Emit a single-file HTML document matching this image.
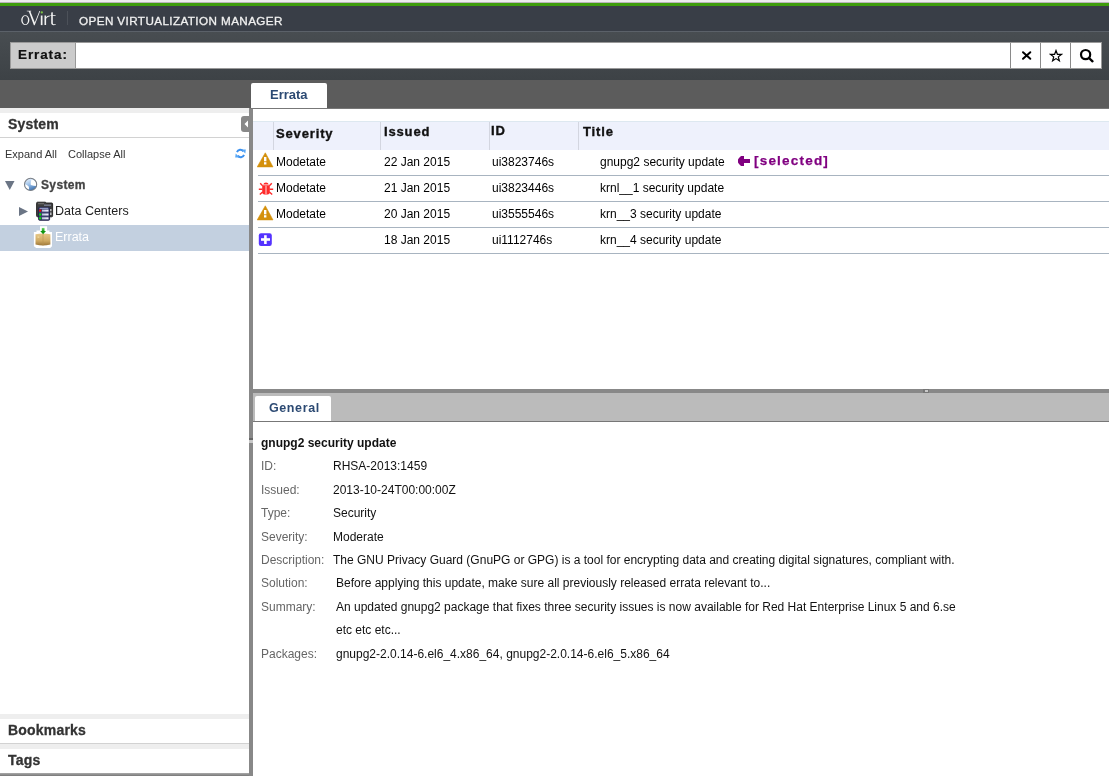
<!DOCTYPE html>
<html><head><meta charset="utf-8">
<style>
*{margin:0;padding:0;box-sizing:border-box}
html,body{width:1109px;height:776px;overflow:hidden;background:#fff;font-family:"Liberation Sans",sans-serif;position:relative}
.a{position:absolute}
.t{position:absolute;white-space:nowrap;line-height:1}
#top{left:0;top:0;width:1109px;height:3px;background:#ececec}
#top2{left:0;top:2px;width:1109px;height:1px;background:#b9b3b9}
#green{left:0;top:3px;width:1109px;height:3px;background:#3e9c0c}
#hdr{left:0;top:6px;width:1109px;height:25px;background:#393e47}
#hdrline{left:0;top:31px;width:1109px;height:1px;background:#5b6169}
#sbar{left:0;top:32px;width:1109px;height:48px;background:linear-gradient(#484d51,#3d4246)}
#band{left:0;top:80px;width:1109px;height:28px;background:#5c5c5c}
.logo{left:21px;top:8px;font-family:"Liberation Serif",serif;color:#fff;font-size:21px;letter-spacing:-2px}
.sep{left:67px;top:11px;width:1px;height:14px;background:#4c5159}
.brand{left:79px;top:15px;color:#f0f0f0;font-size:11.7px;letter-spacing:0.4px;-webkit-text-stroke:0.3px #f0f0f0}
#slabel{left:10px;top:42px;width:66px;height:27px;background:#cbcbcb;border:1px solid #999}
#sinput{left:75px;top:42px;width:1027px;height:27px;background:#fff;border:1px solid #999}
.sbtn{top:43px;width:1px;height:25px;background:#8a8a8a}
/* left panel */
#lp{left:0;top:108px;width:249px;height:668px;background:#fff}
.strip{left:0;width:249px;height:5px;background:#eeeeee}
.hline{left:0;width:249px;height:1px;background:#d2d2d2}
#split{left:249px;top:108px;width:4px;height:668px;background:#888}
#hsplit{left:253px;top:389px;width:856px;height:4px;background:#888}
.sec{font-weight:bold;font-size:14px;color:#333;letter-spacing:0.2px;-webkit-text-stroke:0.3px #333}
.small{font-size:11px;color:#333}
#selrow{left:0;top:225px;width:249px;height:26px;background:#c3d0e0}
/* main */
#mline{left:250px;top:108px;width:859px;height:1px;background:#777}
.tab{background:#fff;border-radius:2px 2px 0 0}
.tabt{font-weight:bold;color:#2c4a73}
#thead{left:253px;top:121px;width:856px;height:29px;background:#eef1fc;border-top:1px solid #dde8f0}
.csep{top:122px;width:1px;height:28px;background:#d3d6e0}
.th{font-weight:bold;font-size:13px;color:#111;letter-spacing:0.85px;-webkit-text-stroke:0.35px #111}
.rline{left:258px;width:851px;height:1px;background:#a8b4c0}
.td{font-size:12px;color:#000}
#dtabbar{left:253px;top:393px;width:856px;height:28px;background:#bbb}
#dtabline{left:253px;top:421px;width:856px;height:1px;background:#777}
.lbl{font-size:12px;color:#666}
.val{font-size:12px;color:#111}
#bottom{left:0;top:773px;width:249px;height:3px;background:linear-gradient(#aaa,#777)}
</style></head><body><div id="root" style="position:absolute;left:0;top:0;width:1109px;height:776px;will-change:transform">
<div id="top" class="a"></div>
<div id="top2" class="a"></div>
<div id="green" class="a"></div>
<div id="hdr" class="a"></div>
<div id="hdrline" class="a"></div>
<div id="sbar" class="a"></div>
<div id="band" class="a"></div>
<svg class="a" style="left:0;top:0" width="70" height="31" viewBox="0 0 70 31"><g fill="#f2f2f2"><path d="M25.3 15.2C27.6 15.2 29.4 17.3 29.4 20.1C29.4 23 27.6 25.1 25.3 25.1C23 25.1 21.2 23 21.2 20.1C21.2 17.3 23 15.2 25.3 15.2ZM25.1 16.1C23.6 16.1 22.6 17.8 22.6 20.1C22.6 22.6 23.7 24.3 25.4 24.3C26.9 24.3 28 22.5 28 20.1C28 17.7 26.9 16.1 25.1 16.1Z"/><path d="M26.8 10.8H31.2V11.3L30.4 11.5L34.8 22.6L39.4 11H40.2L34.7 25.2H33.9L28.8 11.5L26.8 11.3Z"/><rect x="40.8" y="15.5" width="1.7" height="9.6"/><path d="M44.5 15.5H46.1V17.6C46.8 16.2 48 15.3 49.8 15.4V16.6C48.2 16.5 46.7 17.6 46.1 18.8V25.1H44.5Z"/><path d="M51.2 12.6L52.8 12.2V15.2H55.6V16H52.8V23C52.8 23.9 53.4 24.3 54.1 24.3C54.7 24.3 55.3 24.1 55.9 23.9V24.6C55.2 25 54.5 25.2 53.7 25.2C52.1 25.2 51.2 24.4 51.2 23V16H50.4V15.3L51.2 15.2Z"/></g><circle cx="41.8" cy="12.4" r="1.15" fill="#7ac143"/></svg>
<div class="a sep"></div>
<div class="t brand">OPEN VIRTUALIZATION MANAGER</div>
<div id="slabel" class="a"></div>
<div class="t" style="left:18px;top:48px;font-weight:bold;font-size:13.5px;letter-spacing:0.9px;color:#111;-webkit-text-stroke:0.2px #111">Errata:</div>
<div id="sinput" class="a"></div>
<div class="a sbtn" style="left:1010px"></div>
<div class="a sbtn" style="left:1040px"></div>
<div class="a sbtn" style="left:1070px"></div>
<svg class="a" style="left:1020px;top:49px" width="14" height="13" viewBox="0 0 14 13"><path d="M3 3.2L10.3 9.8M10.3 3.2L3 9.8" stroke="#000" stroke-width="2" stroke-linecap="round"/></svg>
<svg class="a" style="left:1049px;top:48.5px" width="14" height="14" viewBox="0 0 14 14"><path d="M7 1.5L8.4 5.3L12.4 5.4L9.3 7.9L10.4 11.8L7 9.6L3.6 11.8L4.7 7.9L1.6 5.4L5.6 5.3Z" fill="none" stroke="#000" stroke-width="1.2" stroke-linejoin="miter"/></svg>
<svg class="a" style="left:1079px;top:48px" width="16" height="15" viewBox="0 0 16 15"><circle cx="6.6" cy="6.6" r="4.6" fill="none" stroke="#000" stroke-width="2.2"/><path d="M10 10L13.5 13.3" stroke="#000" stroke-width="2.4" stroke-linecap="round"/></svg>

<!-- left panel -->
<div id="lp" class="a"></div>
<div class="a strip" style="top:108px"></div>
<div class="t sec" style="left:8px;top:117px">System</div>
<div class="a hline" style="top:137px"></div>
<div class="t small" style="left:5px;top:149px">Expand All</div>
<div class="t small" style="left:68px;top:149px">Collapse All</div>
<svg class="a" style="left:234px;top:147px" width="13" height="13" viewBox="0 0 13 13"><path d="M3 5.2A3.6 3.6 0 0 1 9.3 4.3" fill="none" stroke="#3a90f0" stroke-width="2"/><path d="M7.4 2.6L11.8 2.4L11.3 6.6Z" fill="#5aa8f5"/><path d="M10 7.8A3.6 3.6 0 0 1 3.7 8.7" fill="none" stroke="#3a90f0" stroke-width="2"/><path d="M5.6 10.4L1.2 10.6L1.7 6.4Z" fill="#5aa8f5"/></svg>

<!-- tree -->
<svg class="a" style="left:5px;top:181px" width="10" height="9" viewBox="0 0 10 9"><path d="M0 0H9.5L4.75 9Z" fill="#6b7585"/></svg>
<svg class="a" style="left:23px;top:177px" width="15" height="15" viewBox="0 0 15 15"><defs><linearGradient id="gl" x1="0.2" y1="0.1" x2="0.6" y2="1"><stop offset="0" stop-color="#e2effc"/><stop offset="0.45" stop-color="#9cc0e8"/><stop offset="1" stop-color="#3a70b0"/></linearGradient></defs><circle cx="7.6" cy="7.4" r="6.2" fill="url(#gl)"/><path d="M8.6 2.6C10.2 2.6 12.2 3.8 13.2 5.6L13.4 9C11.6 9 9.6 8.6 7.8 8C7.5 6.2 7.8 4.2 8.6 2.6Z" fill="#fff"/><path d="M1.4 7.2C3 7.3 4.8 8.2 5.6 9.5C6.1 10.5 6.2 11.6 5.9 12.8C3.6 11.9 1.6 9.8 1.4 7.2Z" fill="#fff"/><circle cx="7.6" cy="7.4" r="6.1" fill="none" stroke="#7a7f86" stroke-width="1.1"/></svg>
<div class="t" style="left:41px;top:179px;font-weight:bold;font-size:12px;letter-spacing:0.35px;color:#444;-webkit-text-stroke:0.3px #444">System</div>
<svg class="a" style="left:19px;top:207px" width="10" height="9" viewBox="0 0 10 9"><path d="M0 0V9L9 4.5Z" fill="#6b7585"/></svg>
<svg class="a" style="left:35px;top:201px" width="19" height="20" viewBox="0 0 19 20"><defs><linearGradient id="bar" x1="0" x2="1"><stop offset="0" stop-color="#b8bce0"/><stop offset="1" stop-color="#f4f4ff"/></linearGradient></defs><path d="M1.6 2.2Q1.6 1.2 2.6 1.2H10.5L11.2 2H16.7Q17.6 2 17.6 3V14.8Q17.6 15.8 16.6 15.8H2.6Q1.6 15.8 1.6 14.8Z" fill="#3e3e3e" stroke="#1c1c1c" stroke-width="0.9"/><rect x="3" y="2.2" width="6" height="1" fill="#777"/><rect x="9" y="3.6" width="7" height="1.1" fill="#8a90a8"/><rect x="15" y="8" width="1.5" height="2.2" fill="#c8c8c8"/><rect x="15" y="11.5" width="1.5" height="2.5" fill="#c8c8c8"/><rect x="3.6" y="6.3" width="11" height="13" rx="1" fill="#3a3f6c" stroke="#20234a" stroke-width="0.9"/><rect x="4.6" y="6.8" width="8.6" height="1" fill="#a6aed8"/><rect x="4.2" y="8.6" width="2" height="2" fill="#f00"/><rect x="4.2" y="12.5" width="2" height="2" fill="#0e0"/><rect x="4.2" y="16.3" width="2" height="2" fill="#0e0"/><rect x="7" y="8.6" width="6.5" height="2" fill="url(#bar)"/><rect x="7" y="12.5" width="6.5" height="2" fill="url(#bar)"/><rect x="7" y="16.3" width="6.5" height="2" fill="url(#bar)"/></svg>
<div class="t" style="left:55px;top:205px;font-size:12.5px;color:#222">Data Centers</div>
<div id="selrow" class="a"></div>
<svg class="a" style="left:33px;top:225px" width="20" height="24" viewBox="0 0 20 24"><defs><linearGradient id="bx" x1="0" y1="0" x2="0" y2="1"><stop offset="0" stop-color="#e6c88a"/><stop offset="0.6" stop-color="#cfa962"/><stop offset="1" stop-color="#9c7638"/></linearGradient><linearGradient id="ar" x1="0" y1="0" x2="0" y2="1"><stop offset="0" stop-color="#6fe06f"/><stop offset="1" stop-color="#0a8a0a"/></linearGradient></defs><path d="M7 1.2H14.1V5.4H16.4V6.9H19V21.2L17.2 23H3.2L0.9 21.2V6.9H3.5V5.4H7Z" fill="#fff"/><path d="M2.5 9.2Q10 8 17.4 9.2V19.6Q10 21.6 2.5 19.6Z" fill="url(#bx)"/><path d="M10 9V20.7" stroke="#b89352" stroke-width="0.6"/><rect x="4.5" y="11.5" width="1.8" height="1.2" fill="#f2dca0"/><rect x="8.8" y="2.9" width="2.7" height="3.6" fill="url(#ar)"/><path d="M7.2 6H13L10.1 9.2Z" fill="#0f950f"/></svg>
<div class="t" style="left:55px;top:231px;font-size:12.5px;color:#fff">Errata</div>

<div class="a strip" style="top:714px"></div>
<div class="t sec" style="left:8px;top:723px">Bookmarks</div>
<div class="a hline" style="top:743px"></div>
<div class="a strip" style="top:744px"></div>
<div class="t sec" style="left:8px;top:753px">Tags</div>
<div id="bottom" class="a"></div>

<div id="split" class="a"></div><div class="a" style="left:249px;top:438px;width:4px;height:2px;background:#666"></div><div class="a" style="left:249px;top:440px;width:4px;height:3px;background:#c8c8c8"></div>
<svg class="a" style="left:241px;top:116px" width="8" height="16" viewBox="0 0 8 16"><path d="M8 0H3A3 3 0 0 0 0 3V13A3 3 0 0 0 3 16H8Z" fill="#888"/><path d="M3.5 8L7 4.5V11.5Z" fill="#fff"/></svg>

<!-- main -->
<div id="mline" class="a"></div>
<div class="a tab" style="left:251px;top:83px;width:76px;height:25px"></div>
<div class="t tabt" style="left:270px;top:88px;font-size:13px">Errata</div>

<div id="thead" class="a"></div>
<div class="a csep" style="left:273px"></div>
<div class="a csep" style="left:380px"></div>
<div class="a csep" style="left:489px"></div>
<div class="a csep" style="left:578px"></div>
<div class="t th" style="left:276px;top:127px">Severity</div>
<div class="t th" style="left:384px;top:125px">Issued</div>
<div class="t th" style="left:491px;top:124px">ID</div>
<div class="t th" style="left:583px;top:125px">Title</div>

<div class="a rline" style="top:175px"></div>
<div class="a rline" style="top:201px"></div>
<div class="a rline" style="top:227px"></div>
<div class="a rline" style="top:253px"></div>

<svg class="a" style="left:257px;top:152px" width="17" height="16" viewBox="0 0 17 16"><path d="M8.3 0.8L16 14.9H0.2Z" fill="#d4900b" stroke="#d4900b" stroke-width="0.6" stroke-linejoin="round"/><rect x="7" y="5" width="2.4" height="4.3" fill="#fff"/><rect x="7" y="10.2" width="2.4" height="2.3" fill="#fff"/></svg>
<svg class="a" style="left:258px;top:180px" width="16" height="16" viewBox="0 0 16 16"><path d="M5.2 4.4A2.9 2.7 0 0 1 10.8 4.4Z" fill="#ff2a2a"/><path d="M4.2 5.2H11.8V12.2Q11.8 14.6 9.5 14.6H6.5Q4.2 14.6 4.2 12.2Z" fill="#ff2a2a"/><path d="M2.2 3.2L4.6 5.8M13.8 3.2L11.4 5.8M0.8 9.3H4.5M15.2 9.3H11.5M1.8 14.6L4.6 12M14.2 14.6L11.4 12" stroke="#ff2a2a" stroke-width="1.4"/><rect x="7.2" y="5.6" width="1.6" height="8.6" fill="#ff9a9a"/></svg>
<svg class="a" style="left:257px;top:205px" width="17" height="16" viewBox="0 0 17 16"><path d="M8.3 0.8L16 14.9H0.2Z" fill="#d4900b" stroke="#d4900b" stroke-width="0.6" stroke-linejoin="round"/><rect x="7" y="5" width="2.4" height="4.3" fill="#fff"/><rect x="7" y="10.2" width="2.4" height="2.3" fill="#fff"/></svg>
<svg class="a" style="left:258px;top:233px" width="14" height="14" viewBox="0 0 14 14"><rect x="0.8" y="0.2" width="13" height="12.8" rx="2.2" fill="#5533ff"/><rect x="3" y="5.2" width="9" height="2.6" fill="#fff"/><rect x="6.1" y="2.2" width="2.6" height="8.8" fill="#fff"/></svg>

<div class="t td" style="left:276px;top:156px">Modetate</div>
<div class="t td" style="left:384px;top:156px">22 Jan 2015</div>
<div class="t td" style="left:492px;top:156px">ui3823746s</div>
<div class="t td" style="left:600px;top:156px">gnupg2 security update</div>
<svg class="a" style="left:737px;top:155px" width="14" height="12" viewBox="0 0 14 12"><path d="M1 4.5L2 3L3 2L4 1H7V4H13V8H7V11H4L3 10L2 9L1 7.5Z" fill="#800080"/></svg>
<div class="t" style="left:754px;top:154px;font-weight:bold;font-size:13.5px;letter-spacing:1.2px;color:#800080;-webkit-text-stroke:0.25px #800080">[selected]</div>

<div class="t td" style="left:276px;top:182px">Modetate</div>
<div class="t td" style="left:384px;top:182px">21 Jan 2015</div>
<div class="t td" style="left:492px;top:182px">ui3823446s</div>
<div class="t td" style="left:600px;top:182px">krnl__1 security update</div>

<div class="t td" style="left:276px;top:208px">Modetate</div>
<div class="t td" style="left:384px;top:208px">20 Jan 2015</div>
<div class="t td" style="left:492px;top:208px">ui3555546s</div>
<div class="t td" style="left:600px;top:208px">krn__3 security update</div>

<div class="t td" style="left:384px;top:234px">18 Jan 2015</div>
<div class="t td" style="left:492px;top:234px">ui1112746s</div>
<div class="t td" style="left:600px;top:234px">krn__4 security update</div>

<div id="hsplit" class="a"></div><div class="a" style="left:923px;top:389px;width:6px;height:4px;background:#777"></div><div class="a" style="left:925px;top:390px;width:3px;height:2px;background:#c8c8c8"></div>
<div id="dtabbar" class="a"></div>
<div id="dtabline" class="a"></div>
<div class="a tab" style="left:255px;top:396px;width:76px;height:25px"></div>
<div class="t tabt" style="left:269px;top:402px;font-size:12.5px;letter-spacing:0.6px">General</div>

<div class="t" style="left:261px;top:437px;font-size:12px;font-weight:bold;color:#111">gnupg2 security update</div>
<div class="t lbl" style="left:261px;top:460px">ID:</div><div class="t val" style="left:333px;top:460px">RHSA-2013:1459</div>
<div class="t lbl" style="left:261px;top:484px">Issued:</div><div class="t val" style="left:333px;top:484px">2013-10-24T00:00:00Z</div>
<div class="t lbl" style="left:261px;top:507px">Type:</div><div class="t val" style="left:333px;top:507px">Security</div>
<div class="t lbl" style="left:261px;top:531px">Severity:</div><div class="t val" style="left:333px;top:531px">Moderate</div>
<div class="t lbl" style="left:261px;top:554px">Description:</div><div class="t val" style="left:333px;top:554px">The GNU Privacy Guard (GnuPG or GPG) is a tool for encrypting data and creating digital signatures, compliant with.</div>
<div class="t lbl" style="left:261px;top:577px">Solution:</div><div class="t val" style="left:336px;top:577px">Before applying this update, make sure all previously released errata relevant to...</div>
<div class="t lbl" style="left:261px;top:601px">Summary:</div><div class="t val" style="left:336px;top:601px">An updated gnupg2 package that fixes three security issues is now available for Red Hat Enterprise Linux 5 and 6.se</div>
<div class="t val" style="left:336px;top:624px">etc etc etc...</div>
<div class="t lbl" style="left:261px;top:648px">Packages:</div><div class="t val" style="left:336px;top:648px">gnupg2-2.0.14-6.el6_4.x86_64, gnupg2-2.0.14-6.el6_5.x86_64</div>
</div></body></html>
